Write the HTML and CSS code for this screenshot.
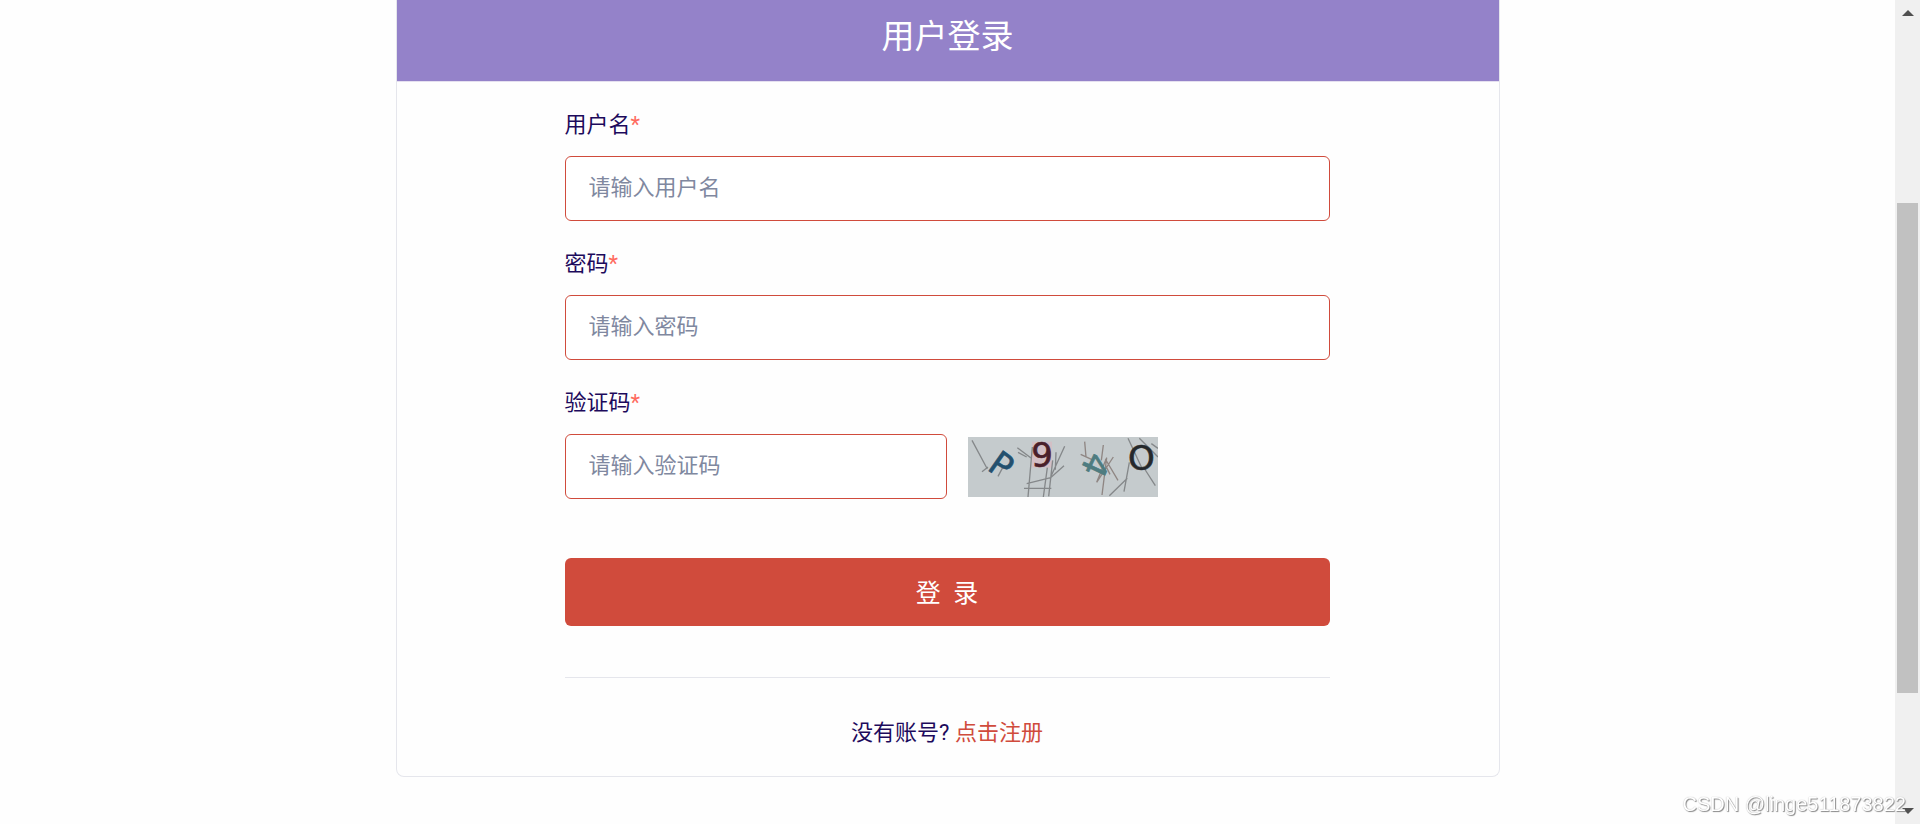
FILE: index.html
```
<!DOCTYPE html>
<html lang="zh-CN">
<head>
    <meta charset="UTF-8">
    <title>用户登录</title>
    <link rel="stylesheet" href="styles.css">
</head>
<body>

    <main class="page">
        <div class="card">
            <h1 class="card-header">用户登录</h1>

            <form class="login-form">
                <div class="field">
                    <label for="username">用户名<span class="required">*</span></label>
                    <input type="text" id="username" placeholder="请输入用户名">
                </div>
                <div class="field">
                    <label for="password">密码<span class="required">*</span></label>
                    <input type="password" id="password" placeholder="请输入密码">
                </div>
                <div class="field">
                    <label for="captcha">验证码<span class="required">*</span></label>
                    <div class="captcha-row">
                        <input type="text" id="captcha" placeholder="请输入验证码">
                        <svg class="captcha" viewBox="0 0 570 180">
                            <rect width="570" height="180" fill="#c5cbcd"/>
                            <rect x="192" y="14" width="60" height="78" fill="#d3bfc5"/>
                            <g fill="none" stroke="#85888a" stroke-width="4">
                                <path d="M12 10L58 96M42 104L60 90M104 92L90 118"/>
                                <path d="M148 32L190 64M150 46L176 60M193 30L180 180M238 92L226 180M254 70L242 178M290 28L248 120M264 46L262 98M288 86L248 122L176 140M168 154H250"/>
                                <path d="M350 14L354 60M338 52L372 68M406 24L400 70M416 62L386 136L436 60M416 62L402 174M412 66L450 130M412 84L426 112" stroke="#8f8683"/>
                                <path d="M480 4L524 98M514 4L570 60M530 96L562 146M484 76L468 164M478 124L424 176M550 20L570 34"/>
                            </g>
                            <g class="captcha-text">
                                <text x="54" y="96" fill="#23506e" stroke="#23506e" transform="rotate(35 54 96)">P</text>
                                <text x="190" y="90" fill="#4a1f2a" stroke="#4a1f2a">9</text>
                                <text x="364" y="40" fill="#4e7c80" stroke="#4e7c80" transform="rotate(115 364 40)">4</text>
                                <text x="480" y="98" fill="#25282b" stroke="#25282b">O</text>
                            </g>
                        </svg>
                    </div>
                </div>

                <button type="submit" class="btn-login">登&nbsp;&nbsp;录</button>

                <hr class="divider">

                <p class="register">没有账号? <a href="#">点击注册</a></p>
            </form>
        </div>
    </main>

    <!-- scroll track -->
    <div class="scroll-track">
        <svg class="arrow" viewBox="0 0 12 6"><path d="M0 6L6 0L12 6Z"/></svg>
        <div class="scroll-thumb"></div>
        <svg class="arrow" viewBox="0 0 12 6"><path d="M0 0L6 6L12 0Z"/></svg>
    </div>

    <div class="watermark">CSDN @linge511873822</div>

</body>
</html>
```
FILE: styles.css
```
* {
    box-sizing: border-box;
}

body {
    margin: 0;
    display: flex;
    min-height: 100vh;
    background-color: #fefefe;
    color: #1d0a5c;
    font-family: Roboto, "Noto Sans CJK SC", sans-serif;
    font-size: 22px;
    font-weight: 400;
    line-height: 33px;
}

.page {
    flex: 1;
}

.card {
    max-width: 1104px;
    margin: 0 auto;
    border: 1px solid #e5e6ec;
    border-top: 0;
    border-radius: 0 0 8px 8px;
}

.card-header {
    margin: 0;
    padding: 17px 0 24px;
    border-bottom: 1px solid #e5e0f0;
    background-color: #9482c9;
    background-clip: padding-box;
    color: #fff;
    font-size: 33px;
    font-weight: 400;
    line-height: 40px;
    text-align: center;
}

.login-form {
    padding: 0 169px 27px 168px;
}

.field {
    padding-top: 26px;
}

label {
    display: block;
    margin-bottom: 15px;
}

.required {
    color: #ff6b5e;
}

input {
    display: block;
    width: 100%;
    height: 65px;
    padding: 0 23px 2px;
    border: 1px solid #d04b3c;
    border-radius: 6px;
    background-color: #fff;
    color: #1d0a5c;
    font: inherit;
}

input::placeholder {
    color: #8088a0;
    opacity: 1;
}

.captcha-row {
    display: flex;
    align-items: center;
    gap: 21px;
}

.captcha-row input {
    width: 50%;
}

.captcha {
    width: 190px;
    height: 60px;
}

.captcha-text {
    font-family: "DejaVu Sans", sans-serif;
    font-size: 102px;
    stroke-width: 2px;
}

.btn-login {
    display: block;
    width: 100%;
    height: 68px;
    margin-top: 59px;
    padding: 0 0 3px;
    border: 0;
    border-radius: 6px;
    background-color: #d04b3c;
    color: #fff;
    font-family: inherit;
    font-size: 25px;
    font-weight: 400;
}

.divider {
    margin: 51px 0 38px;
    border: 0;
    border-top: 1px solid #e5e6ec;
}

.register {
    margin: 0;
    text-align: center;
}

.register a {
    color: #d04b3c;
    text-decoration: none;
}

.scroll-track {
    display: flex;
    flex-direction: column;
    align-items: center;
    width: 25px;
    padding: 10px 0;
    background-color: #f0f0f0;
}

.arrow {
    width: 12px;
    height: 6px;
    fill: #505050;
}

.scroll-thumb {
    width: 21px;
    height: 490px;
    margin: 187px 0 auto;
    background-color: #c1c1c1;
}

.watermark {
    position: fixed;
    right: 14px;
    bottom: 3px;
    color: #fff;
    font-family: "Liberation Sans", sans-serif;
    font-size: 20px;
    text-shadow: 1px 1px 1px #888, 0 0 1px #aaa;
}
```
